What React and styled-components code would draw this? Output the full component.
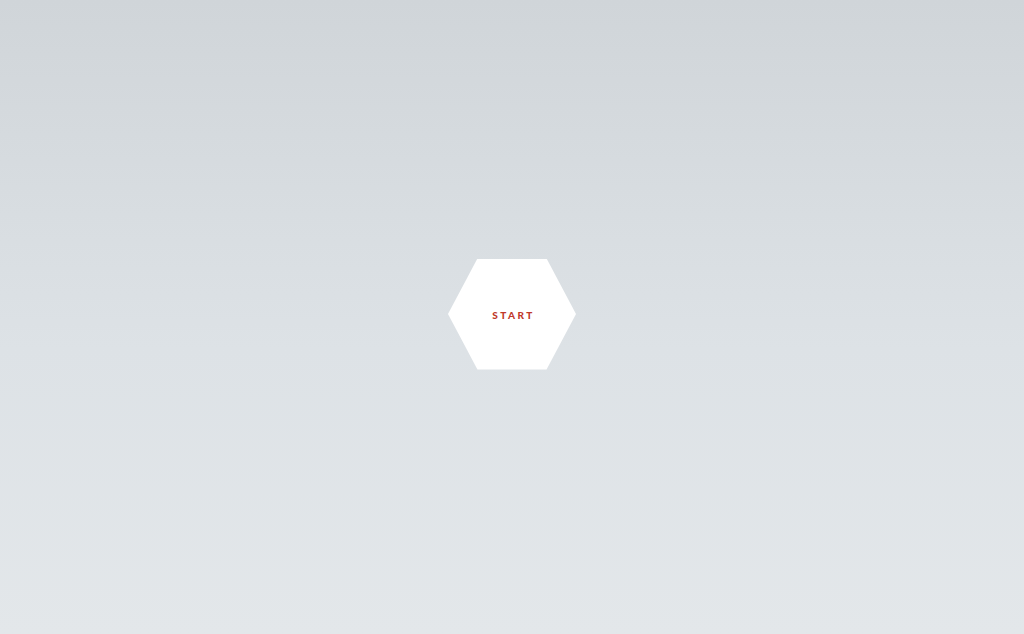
import React from 'react';
import styled, { createGlobalStyle } from 'styled-components';

const GlobalStyle = createGlobalStyle`
    html, body, #root {
        margin: 0;
        height: 100%;
    }
    body {
        font-family: "Lato", "Open Sans", sans-serif;
    }
`;

const Screen = styled.div`
    height: 100vh;
    display: flex;
    align-items: center;
    justify-content: center;
    background: linear-gradient(to bottom, #d0d5d9 0%, #dde2e6 55%, #e3e7ea 100%);
`;

const HexButton = styled.button`
    width: 128px;
    height: 111px;
    margin-top: -6px;
    border: none;
    background: #ffffff;
    clip-path: polygon(23% 0, 77% 0, 100% 50%, 77% 100%, 23% 100%, 0 50%);
    display: flex;
    align-items: center;
    justify-content: center;
    cursor: pointer;
    padding: 0;
`;

const Label = styled.span`
    color: ${({ color }) => color || '#c0392b'};
    font-family: "Lato", sans-serif;
    font-weight: 900;
    font-size: 10px;
    letter-spacing: 2.5px;
    margin-left: 3px;
    margin-top: 2px;
`;

export default function App() {
    return (
        <>
            <GlobalStyle />
            <Screen>
                <HexButton>
                    <Label>START</Label>
                </HexButton>
            </Screen>
        </>
    );
}
